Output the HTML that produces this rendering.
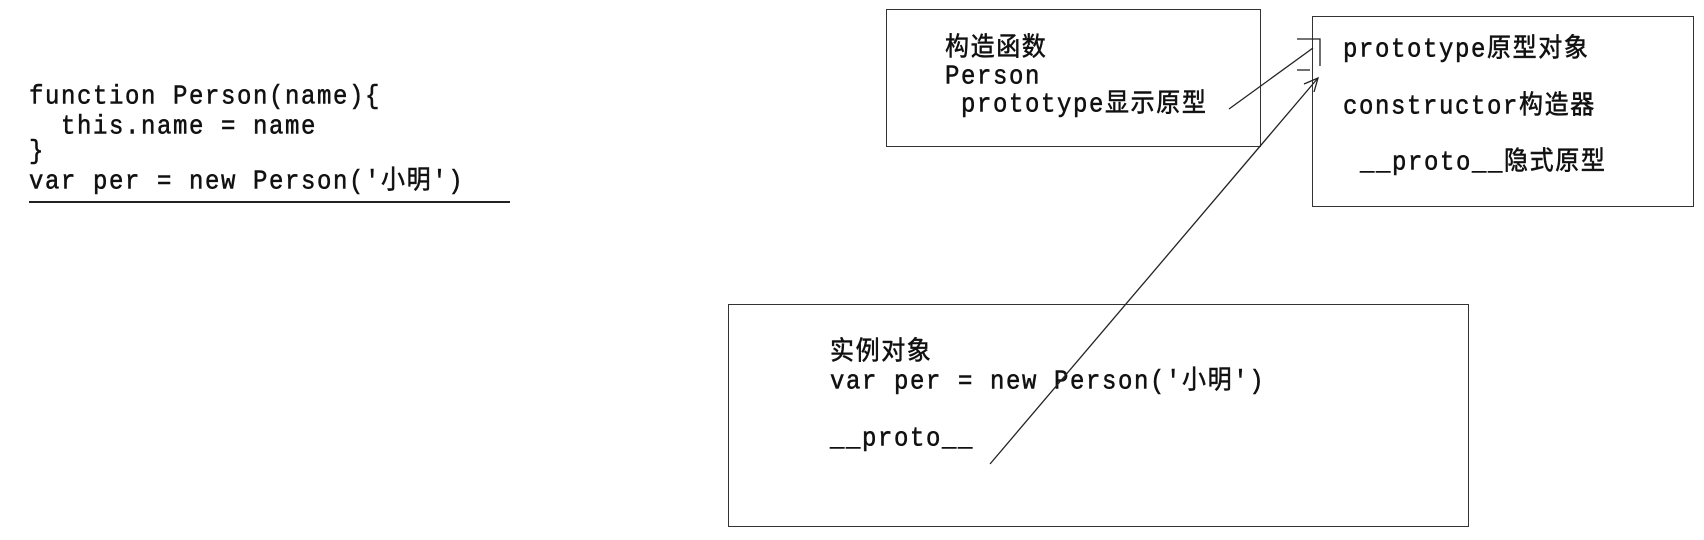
<!DOCTYPE html>
<html><head><meta charset="utf-8"><style>
html,body{margin:0;padding:0;background:#fff;width:1704px;height:540px;overflow:hidden;position:relative}
.t{position:absolute;font-family:"Liberation Mono","WenQuanYi Zen Hei",monospace;font-size:24px;line-height:26px;letter-spacing:1.6px;color:#111;white-space:pre;-webkit-text-stroke:0.5px #111;transform:scaleY(1.1);transform-origin:0 50%}
.b{position:absolute;border:1.5px solid #333;box-sizing:border-box}
</style></head><body>
<div class="t" style="left:29px;top:85px">function Person(name){</div>
<div class="t" style="left:29px;top:115px">  this.name = name</div>
<div class="t" style="left:29px;top:140px">}</div>
<div class="t" style="left:29px;top:170px">var per = new Person('小明')</div>
<div style="position:absolute;left:29px;top:201px;width:481px;height:1.5px;background:#222"></div>

<div class="b" style="left:886px;top:9px;width:375px;height:138px"></div>
<div class="t" style="left:945px;top:37px">构造函数</div>
<div class="t" style="left:945px;top:65px">Person</div>
<div class="t" style="left:961px;top:93px">prototype显示原型</div>

<div class="b" style="left:1312px;top:16px;width:382px;height:191px"></div>
<div class="t" style="left:1343px;top:38px">prototype原型对象</div>
<div class="t" style="left:1343px;top:95px">constructor构造器</div>
<div class="t" style="left:1360px;top:151px">__proto__隐式原型</div>

<div class="b" style="left:728px;top:304px;width:741px;height:223px"></div>
<div class="t" style="left:830px;top:341px">实例对象</div>
<div class="t" style="left:830px;top:370px">var per = new Person('小明')</div>
<div class="t" style="left:830px;top:427px">__proto__</div>

<svg style="position:absolute;left:0;top:0" width="1704" height="540">
<g stroke="#222" stroke-width="1.3" fill="none">
<line x1="1229" y1="109" x2="1313" y2="48"/>
<line x1="990" y1="464" x2="1318" y2="78"/>
<path d="M1297 39 H1320 V66"/>
<path d="M1297 70 H1310"/>
<path d="M1304 84 L1318 78 L1314 92"/>
</g>
</svg>
</body></html>
